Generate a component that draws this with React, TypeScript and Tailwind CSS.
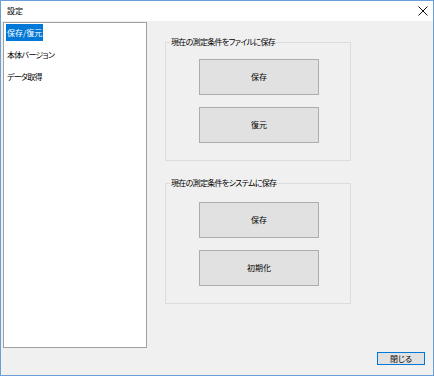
const items = ["保存/復元", "本体バージョン", "データ取得"];

const PanelButton = ({ label }: { label: string }) => (
  <button className="ml-[33px] w-[120px] h-[36px] border border-[#adadad] bg-[#e1e1e1] text-[8px] leading-none text-black">
    {label}
  </button>
);

const Group = ({ title, buttons, first }: { title: string; buttons: string[]; first?: boolean }) => (
  <fieldset
    className={`border border-[#dcdcdc] ${first ? "pt-[10px]" : "mt-[15px] pt-[12px]"} pb-[17px] flex flex-col gap-[12px]`}
  >
    <legend className="ml-[4px] px-[1px] text-[8px] leading-[14px] tracking-[-0.7px] text-black">{title}</legend>
    {buttons.map((b) => (
      <PanelButton key={b} label={b} />
    ))}
  </fieldset>
);

export default function App() {
  return (
    <div className="w-[434px] h-[376px] flex flex-col border border-[#6a9fd8] bg-[#f0f0f0] font-['Noto_Sans_CJK_JP',sans-serif] [font-feature-settings:'palt'] text-black">
      <div className="h-[20px] shrink-0 bg-white flex items-center justify-between pl-[6px] pr-[5px]">
        <span className="text-[8px] leading-none">設定</span>
        <svg width="10" height="10" viewBox="0 0 10 10">
          <path d="M0.5 0.5 L9.5 9.5 M9.5 0.5 L0.5 9.5" stroke="#111" strokeWidth="1" />
        </svg>
      </div>
      <div className="flex-1 flex flex-col px-[2px] pt-[1px]">
        <div className="flex">
          <div className="w-[144px] h-[326px] border border-[#a0a0a0] bg-white pt-[1px] flex flex-col gap-[5px]">
            {items.map((it, i) => (
              <div key={it} className="h-[17px] flex items-center">
                <span
                  className={`ml-[2px] px-[1px] h-[17px] flex items-center text-[8px] leading-none ${
                    i === 0 ? "bg-[#0078d7] text-white" : "text-black tracking-[-0.7px]"
                  }`}
                >
                  {it}
                </span>
              </div>
            ))}
          </div>
          <div className="ml-[18px] w-[186px] pt-[13px] flex flex-col">
            <Group first title="現在の測定条件をファイルに保存" buttons={["保存", "復元"]} />
            <Group title="現在の測定条件をシステムに保存" buttons={["保存", "初期化"]} />
          </div>
        </div>
        <div className="flex justify-end pr-[6px] mt-[4px]">
          <button className="w-[48px] h-[13px] border border-[#0078d7] bg-[#e1e1e1] text-[8px] leading-none">
            閉じる
          </button>
        </div>
      </div>
    </div>
  );
}
